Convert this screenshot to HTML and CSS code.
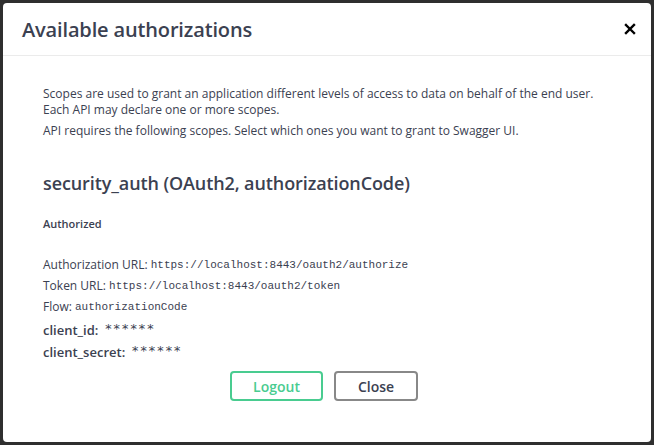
FILE: index.html
```html
<!DOCTYPE html>
<html>
<head>
<meta charset="utf-8">
<link rel="stylesheet" href="styles.css">
</head>
<body>
<div class="modal">
  <div class="modal-header">
    <h3 class="modal-title">Available authorizations</h3>
    <button class="close-btn" aria-label="Close">
      <svg width="12" height="12" viewBox="0 0 12 12"><path d="M2 2L10 10M10 2L2 10" stroke="#000" stroke-width="2.4" stroke-linecap="square"/></svg>
    </button>
  </div>
  <div class="modal-body">
    <div class="scope-def">
      <p>Scopes are used to grant an application different levels of access to data on behalf of the end user. Each API may declare one or more scopes.</p>
      <p>API requires the following scopes. Select which ones you want to grant to Swagger UI.</p>
    </div>
    <h4 class="auth-title">security_auth (OAuth2, authorizationCode)</h4>
    <h6 class="authorized">Authorized</h6>
    <div class="flow-info">
      <p>Authorization URL:&nbsp;<code>https://localhost:8443/oauth2/authorize</code></p>
      <p>Token URL:&nbsp;<code>https://localhost:8443/oauth2/token</code></p>
      <p>Flow:&nbsp;<code>authorizationCode</code></p>
    </div>
    <div class="cred-row"><span class="cred-label">client_id:</span><code class="mask">******</code></div>
    <div class="cred-row"><span class="cred-label">client_secret:</span><code class="mask">******</code></div>
    <div class="btn-wrapper">
      <button class="btn btn-logout">Logout</button>
      <button class="btn btn-close">Close</button>
    </div>
  </div>
</div>
</body>
</html>
```
FILE: styles.css
```css
html, body {
  margin: 0;
  padding: 0;
  height: 100%;
}
body {
  background: #2f2f2f;
  font-family: "Open Sans", "Noto Sans", sans-serif;
  color: #3b4151;
}
.modal {
  margin: 3px;
  height: 439px;
  background: #fff;
  border-radius: 4px;
  box-sizing: border-box;
  display: flex;
  flex-direction: column;
}
.modal-header {
  height: 52px;
  border-bottom: 1px solid #ebebeb;
  display: flex;
  align-items: center;
  justify-content: space-between;
  padding: 0 15px 0 19px;
  flex: none;
}
.modal-title {
  margin: 0;
  font-size: 20px;
  font-weight: 600;
  color: #3b4151;
  letter-spacing: -0.15px;
}
.close-btn {
  border: none;
  background: none;
  padding: 0;
  width: 12px;
  height: 12px;
  display: flex;
}
.modal-body {
  padding: 30px 40px 0 40px;
}
.scope-def p {
  margin: 0 0 5px;
  font-size: 12px;
  line-height: 16px;
  color: #3b4151;
}
.auth-title {
  margin: 32px 0 0;
  font-size: 18px;
  line-height: 24px;
  font-weight: 600;
  letter-spacing: -0.1px;
}
.authorized {
  margin: 21px 0 0;
  font-size: 11px;
  line-height: 16px;
  font-weight: 600;
}
.flow-info {
  margin-top: 25px;
}
.flow-info p {
  margin: 0 0 5px;
  height: 16px;
  display: flex;
  align-items: center;
  font-size: 12px;
  line-height: 16px;
}
.flow-info p:last-child {
  margin-bottom: 4px;
}
code {
  font-family: "Liberation Mono", "DejaVu Sans Mono", monospace;
  font-size: 11px;
  line-height: 16px;
}
.cred-row {
  display: flex;
  align-items: center;
  height: 22px;
  font-size: 13px;
  font-weight: 600;
}
.cred-label {
  margin-right: 6px;
}
.mask {
  font-family: "DejaVu Sans Mono", monospace;
  font-size: 13px;
  font-weight: 400;
  color: #3b4151;
  margin-top: -3px;
  letter-spacing: 0.6px;
}
.btn-wrapper {
  display: flex;
  justify-content: center;
  gap: 11px;
  margin-top: 8px;
  margin-right: 6px;
}
.btn {
  height: 30px;
  box-sizing: border-box;
  border-radius: 4px;
  background: #fff;
  font-family: inherit;
  font-size: 14px;
  font-weight: 600;
  padding: 0;
}
.btn-logout {
  width: 93px;
  border: 2px solid #49cc90;
  color: #49cc90;
}
.btn-close {
  width: 84px;
  border: 2px solid #888;
  color: #3b4151;
}
```
